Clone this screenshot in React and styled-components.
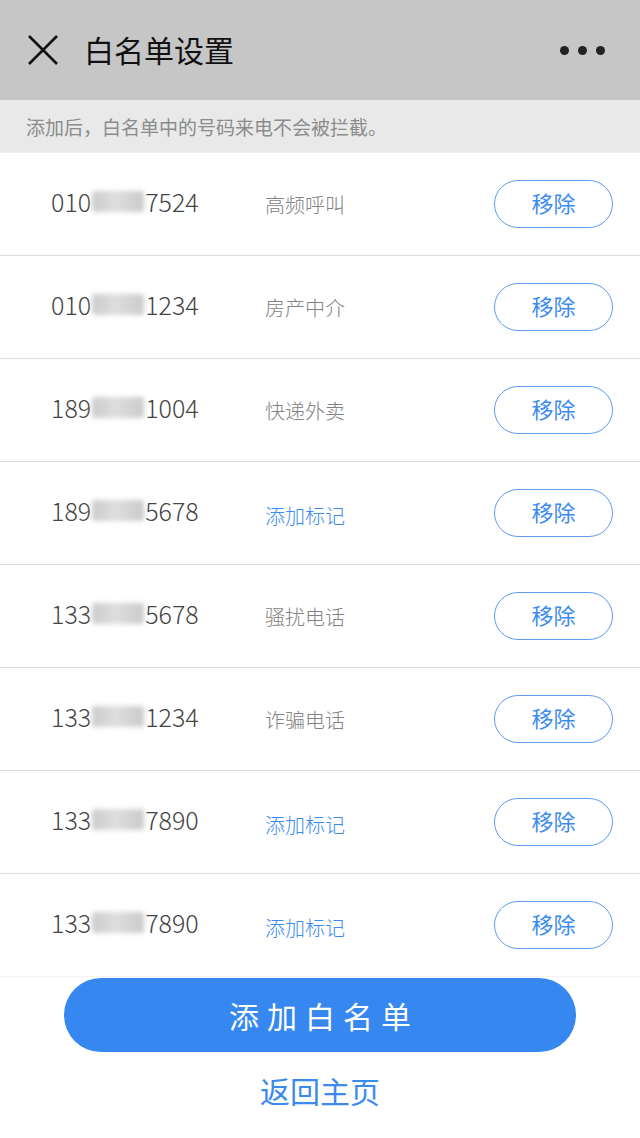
import styled, { createGlobalStyle } from "styled-components"

const GlobalStyle = createGlobalStyle`
  html, body {
    margin: 0;
    padding: 0;
    background: #ffffff;
  }
  body {
    font-family: "Noto Sans CJK SC", "Noto Sans", sans-serif;
  }
  * {
    box-sizing: border-box;
  }
`

const Page = styled.div`
  width: 640px;
  min-height: 1138px;
  display: flex;
  flex-direction: column;
  background: #ffffff;
`

const Header = styled.div`
  height: 100px;
  background: #c6c6c6;
  display: flex;
  align-items: center;
  padding: 0 27px;
`

const Title = styled.h1`
  margin: 0 0 2px 25px;
  font-size: 30px;
  font-weight: 400;
  color: #111111;
  flex: 1;
  line-height: 1;
`

const Dots = styled.div`
  display: flex;
  gap: 9px;
  margin-right: 8px;
`

const Dot = styled.span`
  width: 9px;
  height: 9px;
  border-radius: 50%;
  background: #222222;
`

const Notice = styled.div`
  height: 53px;
  background: #e9e9e9;
  border-bottom: 1px solid #f1f1f1;
  display: flex;
  align-items: center;
  padding-left: 26px;
  font-size: 19px;
  color: #8c8c8c;
`

const List = styled.div`
  display: flex;
  flex-direction: column;
`

const Row = styled.div`
  height: 103px;
  display: flex;
  align-items: center;
  padding: 0 27px 0 51px;
  border-bottom: 1px solid ${(p) => (p.$last ? "#f3f3f3" : "#dcdcdc")};
`

const Number = styled.div`
  width: 214px;
  margin-bottom: 6px;
  font-size: 25px;
  font-weight: 300;
  color: #444444;
  display: flex;
  align-items: center;
`

const Masked = styled.span`
  display: inline-block;
  width: 52px;
  height: 21px;
  margin: 0 1px;
  background: linear-gradient(90deg, #cbcbcb, #dedede 45%, #cacaca);
  filter: blur(2.5px);
  border-radius: 3px;
`

const Tag = styled.div`
  flex: 1;
  font-size: 20px;
  font-weight: 300;
  color: ${(p) => (p.$action ? "#3b8bef" : "#828282")};
  padding-top: ${(p) => (p.$action ? "4px" : "0")};
`

const RemoveButton = styled.button`
  width: 119px;
  height: 48px;
  border: 1px solid #5d9cf1;
  border-radius: 24px;
  background: #ffffff;
  color: #3b8bef;
  font-family: inherit;
  font-size: 22px;
  padding: 0 0 4px;
  cursor: pointer;
`

const Footer = styled.div`
  display: flex;
  flex-direction: column;
  align-items: center;
  padding-top: 1px;
`

const AddButton = styled.button`
  width: 512px;
  height: 74px;
  border: none;
  border-radius: 37px;
  background: #3787f0;
  color: #ffffff;
  font-family: inherit;
  font-size: 30px;
  letter-spacing: 8px;
  text-indent: 8px;
  cursor: pointer;
`

const BackLink = styled.a`
  margin-top: 16px;
  font-size: 30px;
  color: #3b8bef;
  cursor: pointer;
  line-height: 44px;
`

const CloseIcon = () => (
  <svg width="32" height="32" viewBox="0 0 32 32">
    <path d="M2 2 L30 30 M30 2 L2 30" stroke="#111" strokeWidth="2.6" fill="none" />
  </svg>
)

const entries = [
  { head: "010", tail: "7524", tag: "高频呼叫" },
  { head: "010", tail: "1234", tag: "房产中介" },
  { head: "189", tail: "1004", tag: "快递外卖" },
  { head: "189", tail: "5678", tag: null },
  { head: "133", tail: "5678", tag: "骚扰电话" },
  { head: "133", tail: "1234", tag: "诈骗电话" },
  { head: "133", tail: "7890", tag: null },
  { head: "133", tail: "7890", tag: null },
]

const App = () => {
  return (
    <Page>
      <GlobalStyle />
      <Header>
        <CloseIcon />
        <Title>白名单设置</Title>
        <Dots>
          <Dot />
          <Dot />
          <Dot />
        </Dots>
      </Header>
      <Notice>添加后，白名单中的号码来电不会被拦截。</Notice>
      <List>
        {entries.map((e, i) => (
          <Row key={i} $last={i === entries.length - 1}>
            <Number>
              {e.head}
              <Masked />
              {e.tail}
            </Number>
            {e.tag ? <Tag>{e.tag}</Tag> : <Tag $action>添加标记</Tag>}
            <RemoveButton>移除</RemoveButton>
          </Row>
        ))}
      </List>
      <Footer>
        <AddButton>添加白名单</AddButton>
        <BackLink>返回主页</BackLink>
      </Footer>
    </Page>
  )
}

export default App
